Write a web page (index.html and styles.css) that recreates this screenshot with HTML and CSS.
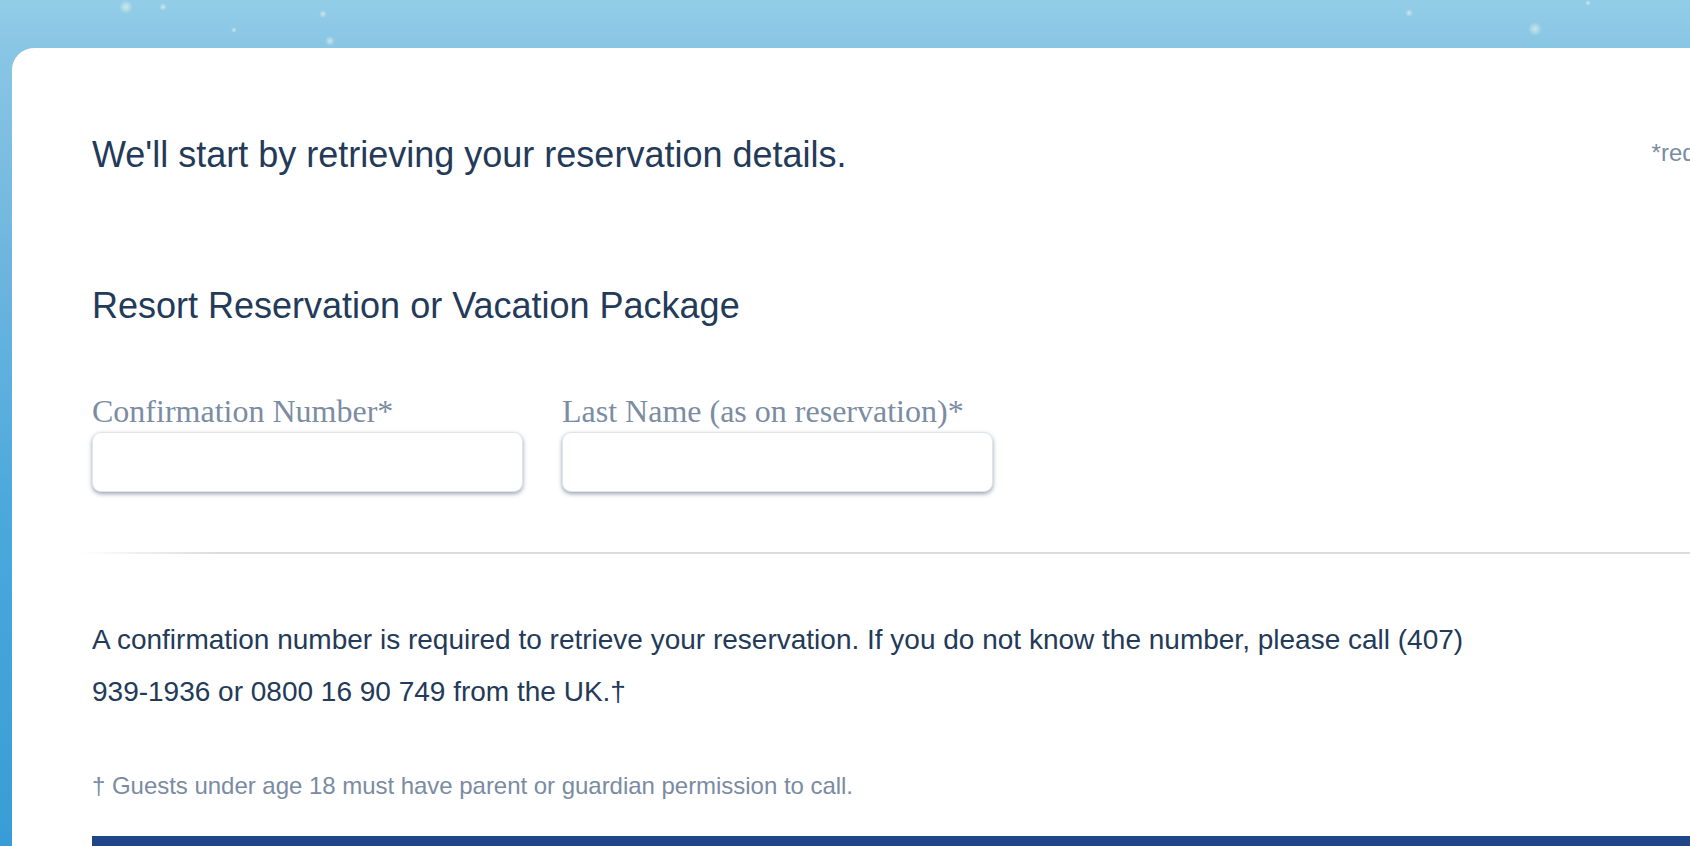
FILE: index.html
```html
<!DOCTYPE html>
<html lang="en">
<head>
<meta charset="utf-8">
<title>Retrieve Reservation</title>
<link rel="stylesheet" href="styles.css">
</head>
<body>
<div class="sky">
  <span class="spark s1"></span>
  <span class="spark s2"></span>
  <span class="spark s3"></span>
  <span class="spark s4"></span>
  <span class="spark s5"></span>
  <span class="spark s6"></span>
  <span class="spark s7"></span>
  <span class="spark s8"></span>
</div>
<main class="card">
  <header class="card-head">
    <h1 class="intro">We'll start by retrieving your reservation details.</h1>
    <span class="required-note">*required</span>
  </header>

  <h2 class="section-title">Resort Reservation or Vacation Package</h2>

  <form class="fields">
    <div class="field">
      <label class="field-label" for="conf">Confirmation Number*</label>
      <input class="field-input" id="conf" type="text">
    </div>
    <div class="field">
      <label class="field-label" for="lname">Last Name (as on reservation)*</label>
      <input class="field-input" id="lname" type="text">
    </div>
  </form>

  <hr class="divider">

  <p class="help">A confirmation number is required to retrieve your reservation. If you do not know the number, please call (407) 939-1936 or 0800 16 90 749 from the UK.†</p>

  <p class="footnote">† Guests under age 18 must have parent or guardian permission to call.</p>

  <div class="action-bar"></div>
</main>
</body>
</html>
```

FILE: styles.css
```css
html, body {
  margin: 0;
  padding: 0;
  height: 100%;
  overflow: hidden;
}

body {
  background: linear-gradient(180deg, #92cde8 0px, #89c6e4 48px, #6fb6df 250px, #4aa8dc 520px, #389dd6 846px);
  font-family: "Liberation Sans", Arial, sans-serif;
  position: relative;
}

.sky {
  position: absolute;
  inset: 0;
  pointer-events: none;
}

.spark {
  position: absolute;
  width: 8px;
  height: 8px;
  border-radius: 50%;
  background: radial-gradient(circle, rgba(255,255,235,0.55) 0, rgba(255,255,255,0) 70%);
}
.s1 { left: 119px; top: 0px; width: 14px; height: 14px; }
.s2 { left: 159px; top: 3px; }
.s3 { left: 319px; top: 10px; }
.s4 { left: 325px; top: 36px; width: 10px; height: 10px; }
.s5 { left: 231px; top: 27px; width: 6px; height: 6px; }
.s6 { left: 1405px; top: 9px; }
.s7 { left: 1585px; top: 0px; width: 6px; height: 6px; }
.s8 { left: 1528px; top: 22px; width: 14px; height: 14px; }

.card {
  position: relative;
  margin: 48px 0 0 12px;
  width: 1818px;
  min-height: 900px;
  box-sizing: border-box;
  padding: 85px 81px 0 80px;
  background: #ffffff;
  border-radius: 22px 0 0 0;
  color: #243a57;
}

.card-head {
  display: flex;
  justify-content: space-between;
  align-items: flex-start;
}

.intro {
  margin: 0;
  font-size: 36px;
  font-weight: normal;
  line-height: 1.2;
  color: #233a58;
}

.required-note {
  margin-top: 6px;
  font-size: 24px;
  line-height: 1.2;
  color: #7a8ba2;
}

.section-title {
  margin: 108px 0 0 0;
  font-size: 36px;
  font-weight: normal;
  line-height: 1.2;
  color: #233a58;
}

.fields {
  display: flex;
  gap: 39px;
  margin-top: 65px;
}

.field {
  display: flex;
  flex-direction: column;
}

.field-label {
  font-family: "Liberation Serif", "Times New Roman", serif;
  font-size: 32px;
  line-height: 38px;
  color: #7b8ca3;
  margin-bottom: 2px;
}

.field-input {
  width: 431px;
  height: 60px;
  box-sizing: border-box;
  border: 1px solid #e1e5ea;
  border-radius: 9px;
  background: #fff;
  box-shadow: 0 2px 4px rgba(55, 75, 105, 0.5);
  outline: none;
  padding: 0 14px;
  font-size: 22px;
}

.divider {
  margin: 60px 0 0 -12px;
  height: 2px;
  border: 0;
  background: linear-gradient(90deg, rgba(221,221,221,0) 0px, #dcdcdc 140px, #dcdcdc 100%);
}

.help {
  margin: 60px 0 0 0;
  max-width: 1420px;
  font-size: 28px;
  line-height: 52px;
  color: #233a58;
}

.footnote {
  margin: 54px 0 0 0;
  font-size: 24px;
  letter-spacing: -0.03px;
  line-height: 1.2;
  color: #7a8ba2;
}

.action-bar {
  margin-top: 35px;
  height: 60px;
  background: #1f4788;
}
```
